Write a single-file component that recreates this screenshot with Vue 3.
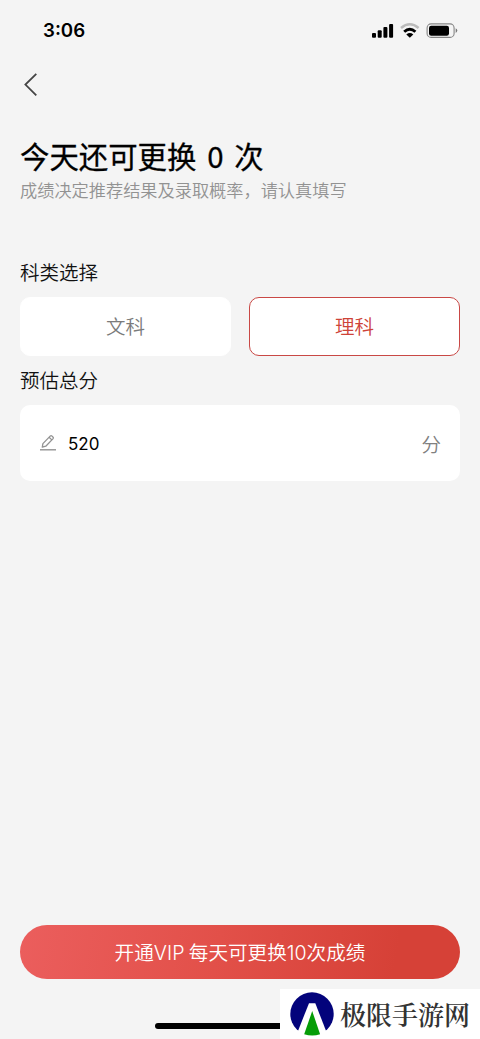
<script setup>
import { ref } from 'vue'

const subjects = ['文科', '理科']
const selected = ref('理科')
const score = ref('520')
</script>

<template>
  <main class="screen">
    <header class="status">
      <span class="time">3:06</span>
      <svg class="indicators" width="88" height="18" viewBox="0 0 88 18">
        <rect x="2" y="12.1" width="4" height="4.6" rx="1" />
        <rect x="7.7" y="9.3" width="4" height="7.4" rx="1" />
        <rect x="13.4" y="6.1" width="4" height="10.6" rx="1" />
        <rect x="19.1" y="2.9" width="4" height="13.8" rx="1" />
        <path d="M31 7 Q39.8 -.6 48.6 7" fill="none" stroke="#bbb" stroke-width="2.5" />
        <path d="M34.2 10.7 Q39.8 5.6 45.4 10.7" fill="none" stroke="#000" stroke-width="2.9" />
        <path d="M36.3 13.5 Q39.8 10.7 43.3 13.5 L39.8 16.8Z" />
        <rect x="57.1" y="2.9" width="27" height="13.5" rx="4" fill="none" stroke="#858585" stroke-width="1.1" />
        <rect x="59" y="4.7" width="20" height="10" rx="2.2" />
        <path d="M85.7 7.3 Q87.3 8.3 87.3 9.6 T85.7 11.9Z" fill="#777" />
      </svg>
    </header>

    <nav class="nav">
      <svg width="16" height="26" viewBox="0 0 16 26">
        <path d="M13.3 1.8 L2.4 12.6 L13.3 23.4" fill="none" stroke="#454545" stroke-width="1.8" />
      </svg>
    </nav>

    <h1 class="title"><span>今天还可更换</span><span class="count">0</span><span>次</span></h1>
    <p class="hint">成绩决定推荐结果及录取概率，请认真填写</p>

    <h2 class="label">科类选择</h2>
    <div class="choices">
      <button
        v-for="s in subjects"
        :key="s"
        class="choice"
        :class="{ active: s === selected }"
        @click="selected = s"
      >{{ s }}</button>
    </div>

    <h2 class="label second">预估总分</h2>
    <div class="field">
      <svg width="18" height="18" viewBox="0 0 18 18" fill="none" stroke="#929292">
        <path d="M3.3 13.2 L3.9 9.6 L11.4 1.9 Q12.1 1.3 12.8 1.9 L14.1 3.2 Q14.7 3.9 14.1 4.6 L6.8 12.2 Z M10.1 3.3 L12.8 5.9" stroke-width="1.3" stroke-linejoin="round" />
        <path d="M1 15.8 H17" stroke-width="1.4" />
      </svg>
      <span class="score">{{ score }}</span>
      <span class="unit">分</span>
    </div>

    <button class="vip">开通<span class="latin">VIP</span> 每天可更换<span class="latin">10</span>次成绩</button>

    <div class="home-bar"></div>
    <aside class="watermark">
      <svg width="44" height="44" viewBox="0 0 44 44">
        <circle cx="22" cy="22" r="21.7" fill="#03037b" />
        <path d="M19 11.2 H25.3 L38 44 H6 Z" fill="#fff" />
        <path d="M22.2 19 L30.1 42.2 Q22.2 45 14.2 42.2 Z" fill="#069d08" />
      </svg>
      <span>极限手游网</span>
    </aside>
  </main>
</template>

<style>
body {
  background: #f4f4f4;
}
</style>

<style scoped>
.screen {
  position: relative;
  box-sizing: border-box;
  display: flex;
  flex-direction: column;
  height: 1039px;
  padding: 0 20px;
  overflow: hidden;
  background: #f4f4f4;
  color: #111;
  font-family: "Noto Sans CJK SC", sans-serif;
}
.status {
  display: flex;
  justify-content: space-between;
  align-items: center;
  height: 60px;
  padding: 0 2px 0 23px;
}
.time {
  padding-top: 2px;
  font: 600 18.7px/24px Inter, sans-serif;
  color: #000;
}
.nav {
  display: flex;
  height: 76px;
  padding: 12px 0 0 3px;
  box-sizing: border-box;
}
.title {
  display: flex;
  margin: 0;
  font-size: 29.4px;
  line-height: 38px;
  font-weight: 400;
  color: #000;
  -webkit-text-stroke: 0.3px #000;
}
.count {
  width: 38px;
  text-align: center;
}
.hint {
  margin: 3px 0 0;
  font-size: 17.2px;
  line-height: 26px;
  font-weight: 350;
  color: #929292;
  white-space: nowrap;
}
.label {
  margin: 54px 0 0;
  font-size: 19.5px;
  line-height: 30px;
  font-weight: 350;
}
.choices {
  display: grid;
  grid-template-columns: 1fr 1fr;
  gap: 18px;
  margin-top: 9.5px;
}
.choice {
  height: 59px;
  padding: 0;
  border: 1.5px solid #fff;
  border-radius: 10px;
  background: #fff;
  color: #7b7b7b;
  font: 350 19.5px/30px "Noto Sans CJK SC", sans-serif;
}
.choice.active {
  border-color: #c94845;
  color: #ce4338;
}
.label.second {
  margin-top: 9.5px;
}
.field {
  display: flex;
  align-items: center;
  box-sizing: border-box;
  height: 76px;
  margin-top: 10px;
  padding: 0 19px;
  border-radius: 10px;
  background: #fff;
}
.score {
  margin-left: 11px;
  padding-top: 1px;
  font: 400 17px/24px Inter, sans-serif;
  color: #000;
}
.unit {
  margin-left: auto;
  font-size: 19.5px;
  font-weight: 350;
  color: #808080;
}
.vip {
  height: 54px;
  margin: 443.5px 0 0;
  padding: 0;
  border: 0;
  border-radius: 27px;
  background: linear-gradient(100deg, #eb5e5d, #e25049 45%, #d64137 85%);
  color: #fff;
  font: 350 19.6px/54px "Noto Sans CJK SC", sans-serif;
}
.latin {
  font-family: Inter, sans-serif;
  font-weight: 300;
}
.home-bar {
  width: 170px;
  height: 6px;
  margin: 44.5px auto 0;
  border-radius: 3px;
  background: #000;
}
.watermark {
  position: absolute;
  right: 0;
  bottom: 0;
  display: flex;
  align-items: center;
  box-sizing: border-box;
  width: 200px;
  height: 50px;
  padding-left: 10px;
  background: #fff;
  color: #333;
  font: 600 26px/40px "Noto Serif CJK SC", "Noto Sans CJK SC", serif;
  white-space: nowrap;
}
.watermark span {
  margin-left: 6px;
}
</style>
